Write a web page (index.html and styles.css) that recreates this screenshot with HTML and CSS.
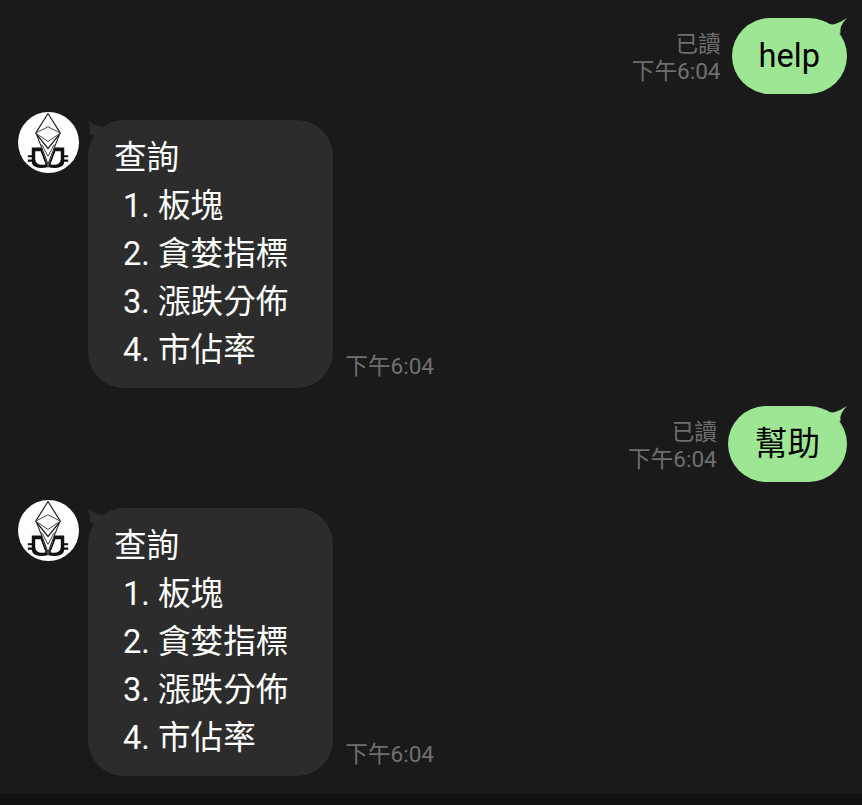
FILE: index.html
```html
<!DOCTYPE html>
<html lang="zh-Hant">
<head>
    <meta charset="UTF-8">
    <meta name="viewport" content="width=device-width, initial-scale=1.0">
    <title>Chat</title>
    <link rel="stylesheet" href="styles.css">
</head>
<body>
    <!-- avatar drawn once, reused for both incoming rows -->
    <svg class="defs" aria-hidden="true">
        <symbol id="eth-avatar" viewBox="0 0 62 62">
            <circle cx="31" cy="31" r="31" fill="#fff"/>
            <path d="M10 45 H15 M10 49.5 H15 M46 45 H51 M46 49.5 H51" stroke="#111" stroke-width="2.2"/>
            <path d="M14 36 H24 L26 43 L31 56 Q23 58 18 56 Q14 54 14 50 Z M47 36 H37 L35 43 L30 56 Q38 58 43 56 Q47 54 47 50 Z" fill="#111"/>
            <path d="M17.5 40 H23 L28 53 Q23 54.5 20 52.5 Q17.5 51 17.5 48 Z M43.5 40 H38 L33 53 Q38 54.5 41 52.5 Q43.5 51 43.5 48 Z" fill="#fff"/>
            <path d="M18.5 22 L24 36 L30.5 53 L37 36 L42.5 22 L30.5 37 Z" fill="#fff" stroke="#222" stroke-width="1.1" stroke-linejoin="round"/>
            <path d="M24 33 L30.5 45 L37 33" fill="none" stroke="#444" stroke-width="1"/>
            <path d="M30.5 1.5 L43 21.5 L30.5 37 L18 21.5 Z" fill="#fff" stroke="#222" stroke-width="1.2" stroke-linejoin="round"/>
            <path d="M18 21.5 L30.5 15 L43 21.5 L30.5 30 Z" fill="#fff" stroke="#444" stroke-width="1"/>
        </symbol>
    </svg>

    <div class="chat">
        <div class="row row-out">
            <div class="meta meta-out">
                <span>已讀</span>
                <span>下午6:04</span>
            </div>
            <div class="bubble bubble-out">
                <svg class="tail-out" viewBox="0 0 22 24"><path d="M0 3.5 Q6 7.5 10 6 Q16 4 22 0 Q14 8 15.5 15 L0 24 Z"/></svg>
                help
            </div>
        </div>

        <div class="row row-in">
            <svg class="avatar"><use href="#eth-avatar"/></svg>
            <div class="bubble bubble-in">
                <svg class="tail-in" viewBox="0 0 24 24"><path d="M0 0 Q6 6 14 7 L24 24 L2 14 Q2 6 0 0 Z"/></svg>
                <div>查詢</div>
                <div class="item">1. 板塊</div>
                <div class="item">2. 貪婪指標</div>
                <div class="item">3. 漲跌分佈</div>
                <div class="item">4. 市佔率</div>
            </div>
            <div class="meta">下午6:04</div>
        </div>

        <div class="row row-out">
            <div class="meta meta-out">
                <span>已讀</span>
                <span>下午6:04</span>
            </div>
            <div class="bubble bubble-out">
                <svg class="tail-out" viewBox="0 0 22 24"><path d="M0 3.5 Q6 7.5 10 6 Q16 4 22 0 Q14 8 15.5 15 L0 24 Z"/></svg>
                幫助
            </div>
        </div>

        <div class="row row-in">
            <svg class="avatar"><use href="#eth-avatar"/></svg>
            <div class="bubble bubble-in">
                <svg class="tail-in" viewBox="0 0 24 24"><path d="M0 0 Q6 6 14 7 L24 24 L2 14 Q2 6 0 0 Z"/></svg>
                <div>查詢</div>
                <div class="item">1. 板塊</div>
                <div class="item">2. 貪婪指標</div>
                <div class="item">3. 漲跌分佈</div>
                <div class="item">4. 市佔率</div>
            </div>
            <div class="meta">下午6:04</div>
        </div>
    </div>
    <div class="bottom-bar"></div>
</body>
</html>
```

FILE: styles.css
```css
html, body {
    margin: 0;
    height: 100%;
}
body {
    display: flex;
    flex-direction: column;
    background-color: #1a1a1a;
    font-family: Roboto, "Noto Sans CJK TC", sans-serif;
    overflow: hidden;
}
.defs {
    display: none;
}
.chat {
    flex: 1;
    display: flex;
    flex-direction: column;
    gap: 26px;
    padding: 18px 15px 0 18px;
}
.row {
    display: flex;
    align-items: flex-end;
}
.row + .row-out {
    margin-top: -8px;
}
.row-out {
    justify-content: flex-end;
    gap: 11px;
}
.row-in {
    align-items: flex-start;
}
.bubble {
    position: relative;
    font-size: 32.6px;
    line-height: 48px;
}
.bubble-out {
    display: flex;
    align-items: center;
    height: 76px;
    box-sizing: border-box;
    padding: 0 27px;
    background-color: #9de693;
    color: #000;
    border-radius: 38px;
}
.bubble-in {
    margin-left: 9px;
    padding: 14px 45px 14px 26px;
    background-color: #2c2c2c;
    color: #fff;
    border-radius: 36px;
}
.item {
    padding-left: 9px;
}
.tail-out {
    position: absolute;
    top: 0;
    right: 0;
    width: 22px;
    height: 24px;
    fill: #9de693;
}
.tail-in {
    position: absolute;
    top: 0;
    left: 0;
    width: 24px;
    height: 24px;
    fill: #2c2c2c;
}
.avatar {
    flex: none;
    width: 61px;
    height: 61px;
    margin-top: -8px;
}
.meta {
    font-size: 22.6px;
    line-height: 27px;
    color: #6f6f6f;
    align-self: flex-end;
    margin-left: 12px;
    margin-bottom: 8px;
}
.meta-out {
    display: flex;
    flex-direction: column;
    align-items: flex-end;
    margin: 0 0 9px;
}
.bottom-bar {
    flex: none;
    height: 11px;
    background-color: #111;
}
```
